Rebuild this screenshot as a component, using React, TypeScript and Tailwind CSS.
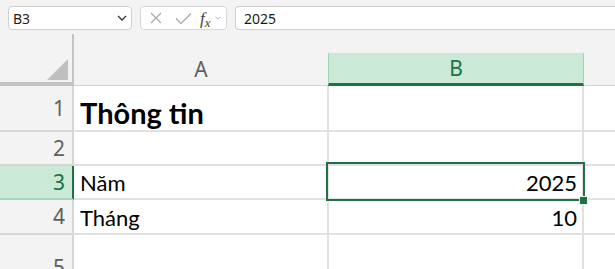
import React from "react";

const label = "font-['Noto_Sans',sans-serif]";
const cellFont = "font-['Lato',sans-serif]";

function Chevron({ className }: { className?: string }) {
  return (
    <svg viewBox="0 0 10 6" className={className} fill="none" stroke="currentColor" strokeWidth="1.3">
      <path d="M1 1l4 4 4-4" />
    </svg>
  );
}

function FormulaBar() {
  return (
    <div className={`h-[34px] bg-[#f3f3f3] flex items-start pt-[6px] pl-[8px] ${label}`}>
      {/* Name box */}
      <div className="w-[124px] h-[24px] bg-white border border-[#cfcfcf] rounded-[4px] flex items-center justify-between pl-[4px] pr-[4px] text-[14px] text-[#1f1f1f]">
        <span>B3</span>
        <Chevron className="w-[10px] h-[6px] text-[#333]" />
      </div>

      {/* Cancel / enter / insert function */}
      <div className="ml-[8px] w-[87px] h-[24px] bg-white border border-[#d6d6d6] rounded-[4px] flex items-center pl-[9px]">
        <svg viewBox="0 0 12 12" className="w-[12px] h-[12px]" fill="none" stroke="#a8a8a8" strokeWidth="1.2">
          <path d="M1 1l10 10M11 1L1 11" />
        </svg>
        <svg viewBox="0 0 17 11" className="ml-[13px] w-[17px] h-[11px]" fill="none" stroke="#a8a8a8" strokeWidth="1.2">
          <path d="M1 5.5l5 5L16 .5" />
        </svg>
        <span className="ml-[8px] flex items-end leading-none text-[#444] font-['Liberation_Serif',serif]">
          <span className="italic text-[17px]">f</span>
          <span className="italic text-[13px] translate-y-[2px]">x</span>
        </span>
        <Chevron className="ml-[4px] w-[6px] h-[4px] text-[#9a9a9a]" />
      </div>

      {/* Formula input */}
      <div className="ml-[8px] flex-1 h-[24px] bg-white border-y border-l border-[#cfcfcf] rounded-l-[4px] pl-[8px] flex items-center text-[14px] text-[#1a1a1a]">
        2025
      </div>
    </div>
  );
}

function ColumnHeaders() {
  return (
    <div className={`h-[52px] bg-[#f3f3f3] flex ${label}`}>
      <div className="w-[74px] h-full border-r-2 border-b-4 border-[#c4c4c4] flex items-end justify-end pr-[4px] pb-[2px]">
        <svg viewBox="0 0 21 21" className="w-[21px] h-[21px]">
          <path d="M21 0V21H0Z" fill="#bfbfbf" />
        </svg>
      </div>
      <div className="w-[254px] self-end h-[33px] border-b border-[#d4d4d4] flex items-center justify-center text-[21px] text-[#5f5f5f] leading-none">
        A
      </div>
      <div className="w-[256px] self-end h-[33px] bg-[#cae9d6] border-x border-[#9fd5b6] border-b-[3px] border-b-[#1e7145] flex items-center justify-center text-[21px] text-[#1e7145] leading-none">
        B
      </div>
      <div className="flex-1 self-end h-[33px] border-b border-[#d4d4d4]" />
    </div>
  );
}

type RowProps = {
  n: string;
  h: string;
  a?: string;
  b?: string;
  title?: boolean;
  selected?: boolean;
};

function Row({ n, h, a, b, title, selected }: RowProps) {
  return (
    <div className={`flex ${h}`}>
      <div
        className={`w-[74px] border-b-2 border-r-2 flex items-center justify-end pr-[7px] text-[21px] leading-none ${label} ${
          selected
            ? "bg-[#cae9d6] text-[#1e7145] border-b-[#a7d8bb] border-r-[#1e7145]"
            : "bg-[#f3f3f3] text-[#5f5f5f] border-[#d6d6d6]"
        }`}
      >
        {n}
      </div>
      <div
        className={`w-[255px] border-r-2 border-b-2 border-[#e1e1e1] flex items-end pl-[6px] leading-none text-black ${cellFont} ${
          title ? "text-[29px] font-bold pb-[3px]" : "text-[22px] pb-[4px]"
        }`}
      >
        {a}
      </div>
      <div
        className={`relative w-[255px] border-r-2 border-b-2 border-[#e1e1e1] flex items-end justify-end pr-[5px] pb-[4px] text-[22px] leading-none text-black ${cellFont}`}
      >
        {b}
        {selected && (
          <>
            <div className="absolute z-10 left-[-3px] top-[-4px] w-[259px] h-[39px] border-2 border-[#1e7145]" />
            <div className="absolute z-10 left-[250px] top-[30px] w-[9px] h-[9px] bg-[#1e7145] border border-[#e8f4ec]" />
          </>
        )}
      </div>
      <div className="flex-1 border-b-2 border-[#e1e1e1]" />
    </div>
  );
}

export default function App() {
  return (
    <div className="w-[615px] h-[269px] overflow-hidden bg-white">
      <FormulaBar />
      <ColumnHeaders />
      <Row n="1" h="h-[46px]" a="Thông tin" title />
      <Row n="2" h="h-[34px]" />
      <Row n="3" h="h-[34px]" a="Năm" b="2025" selected />
      <Row n="4" h="h-[35px]" a="Tháng" b="10" />
      <Row n="5" h="h-[66px]" />
    </div>
  );
}
